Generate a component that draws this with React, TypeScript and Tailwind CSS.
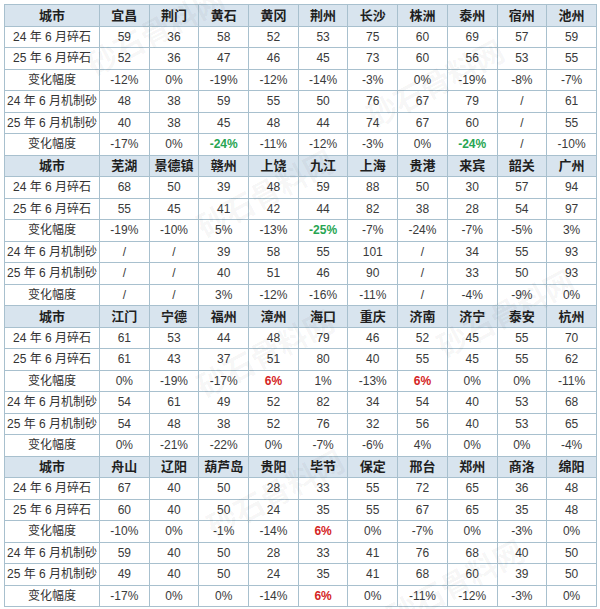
import React from 'react';

type Cell = string | { v: string; c: 'g' | 'r' };

type Section = { cities: string[]; rows: Cell[][] };

const labels = ['24 年 6 月碎石', '25 年 6 月碎石', '变化幅度', '24 年 6 月机制砂', '25 年 6 月机制砂', '变化幅度'];

const g = (v: string): Cell => ({ v, c: 'g' });
const r = (v: string): Cell => ({ v, c: 'r' });

const sections: Section[] = [
  {
    cities: ['宜昌', '荆门', '黄石', '黄冈', '荆州', '长沙', '株洲', '泰州', '宿州', '池州'],
    rows: [
      ['59', '36', '58', '52', '53', '75', '60', '69', '57', '59'],
      ['52', '36', '47', '46', '45', '73', '60', '56', '53', '55'],
      ['-12%', '0%', '-19%', '-12%', '-14%', '-3%', '0%', '-19%', '-8%', '-7%'],
      ['48', '38', '59', '55', '50', '76', '67', '79', '/', '61'],
      ['40', '38', '45', '48', '44', '74', '67', '60', '/', '55'],
      ['-17%', '0%', g('-24%'), '-11%', '-12%', '-3%', '0%', g('-24%'), '/', '-10%'],
    ],
  },
  {
    cities: ['芜湖', '景德镇', '赣州', '上饶', '九江', '上海', '贵港', '来宾', '韶关', '广州'],
    rows: [
      ['68', '50', '39', '48', '59', '88', '50', '30', '57', '94'],
      ['55', '45', '41', '42', '44', '82', '38', '28', '54', '97'],
      ['-19%', '-10%', '5%', '-13%', g('-25%'), '-7%', '-24%', '-7%', '-5%', '3%'],
      ['/', '/', '39', '58', '55', '101', '/', '34', '55', '93'],
      ['/', '/', '40', '51', '46', '90', '/', '33', '50', '93'],
      ['/', '/', '3%', '-12%', '-16%', '-11%', '/', '-4%', '-9%', '0%'],
    ],
  },
  {
    cities: ['江门', '宁德', '福州', '漳州', '海口', '重庆', '济南', '济宁', '泰安', '杭州'],
    rows: [
      ['61', '53', '44', '48', '79', '46', '52', '45', '55', '70'],
      ['61', '43', '37', '51', '80', '40', '55', '45', '55', '62'],
      ['0%', '-19%', '-17%', r('6%'), '1%', '-13%', r('6%'), '0%', '0%', '-11%'],
      ['54', '61', '49', '52', '82', '34', '54', '40', '53', '68'],
      ['54', '48', '38', '52', '76', '32', '56', '40', '53', '65'],
      ['0%', '-21%', '-22%', '0%', '-7%', '-6%', '4%', '0%', '0%', '-4%'],
    ],
  },
  {
    cities: ['舟山', '辽阳', '葫芦岛', '贵阳', '毕节', '保定', '邢台', '郑州', '商洛', '绵阳'],
    rows: [
      ['67', '40', '50', '28', '33', '55', '72', '65', '36', '48'],
      ['60', '40', '50', '24', '35', '55', '67', '65', '35', '48'],
      ['-10%', '0%', '-1%', '-14%', r('6%'), '0%', '-7%', '0%', '-3%', '0%'],
      ['59', '40', '50', '28', '33', '41', '76', '68', '40', '50'],
      ['49', '40', '50', '24', '35', '41', '68', '60', '39', '50'],
      ['-17%', '0%', '0%', '-14%', r('6%'), '0%', '-11%', '-12%', '-3%', '0%'],
    ],
  },
];

// faint diagonal watermark positions
const marks = [
  { top: 8, left: 80 },
  { top: 60, left: 360 },
  { top: 170, left: 190 },
  { top: 290, left: 430 },
  { top: 330, left: 190 },
  { top: 470, left: 200 },
  { top: 560, left: 380 },
];

function Value({ cell }: { cell: Cell }) {
  if (typeof cell === 'string') return <>{cell}</>;
  return <span className={cell.c === 'g' ? 'font-bold text-[#27a552]' : 'font-bold text-[#d42424]'}>{cell.v}</span>;
}

export default function App() {
  return (
    <div className="relative w-[600px] h-[609px] bg-white pt-[4px] pl-[4px] overflow-hidden" style={{ fontFamily: '"Liberation Sans", "Noto Sans CJK SC", sans-serif' }}>
      <table className="table-fixed border-collapse w-[593px] text-[12px] leading-none text-[#3a3a3a]">
        <colgroup>
          <col className="w-[95px]" />
          {Array.from({ length: 10 }).map((_, i) => (
            <col key={i} />
          ))}
        </colgroup>
        <tbody>
          {sections.map((s, si) => (
            <React.Fragment key={si}>
              <tr className="bg-[#d8e4ee]">
                <td className="h-[21.5px] p-0 border border-[#a8c0ce] text-center font-bold text-[13px] text-[#1f1f1f]">城市</td>
                {s.cities.map((c) => (
                  <td key={c} className="h-[21.5px] p-0 border border-[#a8c0ce] text-center font-bold text-[13px] text-[#1f1f1f] whitespace-nowrap">{c}</td>
                ))}
              </tr>
              {s.rows.map((row, ri) => (
                <tr key={ri} className="bg-white">
                  <td className="h-[21.5px] p-0 border border-[#a8c0ce] text-center text-[12px] text-[#333] whitespace-nowrap">{labels[ri]}</td>
                  {row.map((cell, ci) => (
                    <td key={ci} className="h-[21.5px] p-0 border border-[#a8c0ce] text-center whitespace-nowrap">
                      <Value cell={cell} />
                    </td>
                  ))}
                </tr>
              ))}
            </React.Fragment>
          ))}
        </tbody>
      </table>
      {marks.map((m, i) => (
        <div
          key={i}
          className="pointer-events-none absolute -rotate-[28deg] font-bold text-[30px] text-black/[0.045] whitespace-nowrap"
          style={{ top: m.top, left: m.left, fontFamily: '"Noto Sans CJK SC", sans-serif' }}
        >
          砂石骨料网
        </div>
      ))}
    </div>
  );
}
